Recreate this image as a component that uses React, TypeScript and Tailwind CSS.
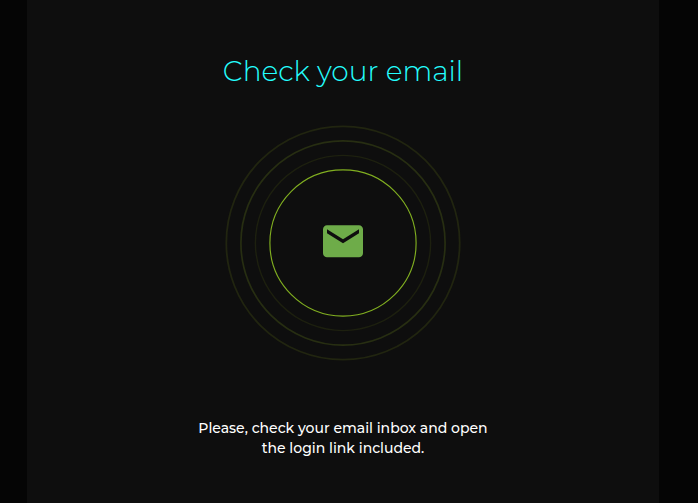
function MailPulse() {
  return (
    <svg className="h-[236px] w-[236px] shrink-0" viewBox="0 0 236 236" fill="none" aria-hidden="true">
      <circle cx="118" cy="118" r="116.7" stroke="#212510" strokeWidth="1.8" />
      <circle cx="118" cy="118" r="102.1" stroke="#272e12" strokeWidth="1.7" />
      <circle cx="118" cy="118" r="87.6" stroke="#1d200f" strokeWidth="1.4" />
      <circle cx="118" cy="118" r="73.1" stroke="#80ae20" strokeWidth="1.15" />
      <path
        transform="translate(94 92.3) scale(2)"
        fill="#6eac49"
        d="M20 4H4c-1.1 0-1.99.9-1.99 2L2 18c0 1.1.9 2 2 2h16c1.1 0 2-.9 2-2V6c0-1.1-.9-2-2-2zm0 4l-8 5-8-5V6l8 5 8-5v2z"
      />
    </svg>
  );
}

export default function App() {
  return (
    <div className="flex h-[503px] w-[698px] overflow-hidden bg-[#050505] pl-[27px] font-[Montserrat,Inter,sans-serif]">
      <main className="flex w-[632px] flex-col items-center bg-[#0e0e0e] pt-[53px] text-center">
        <h1 className="h-[72px] text-[28px] leading-9 font-light whitespace-nowrap text-[#24ffff]">
          Check your email
        </h1>
        <MailPulse />
        <p className="mt-[57px] text-[14px] leading-5 font-medium whitespace-nowrap text-white">
          Please, check your email inbox and open
          <br />
          the login link included.
        </p>
      </main>
    </div>
  );
}
